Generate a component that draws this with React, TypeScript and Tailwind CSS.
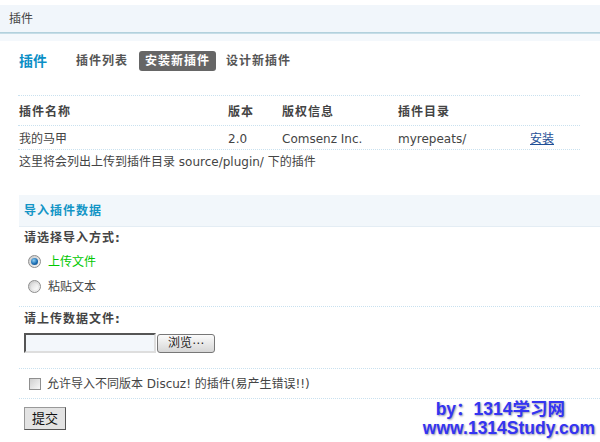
import React from "react";

const FONT = {
  fontFamily: '"DejaVu Sans", "Noto Sans CJK SC", sans-serif',
};

const DOTTED = "border-t border-dotted border-[#c9e1ef]";

function Radio({ checked }: { checked?: boolean }) {
  return (
    <span className="flex h-[13px] w-[13px] items-center justify-center rounded-full border border-[#8d8d8d] bg-[linear-gradient(135deg,#c9c9c9,#f7f7f7)]">
      {checked ? (
        <span className="h-[7px] w-[7px] rounded-full bg-[radial-gradient(circle_at_40%_35%,#8fd0f5,#1b6eb3_55%,#0a3f78)]" />
      ) : (
        <span className="h-[7px] w-[7px] rounded-full bg-[linear-gradient(135deg,#d9d9d9,#ffffff)]" />
      )}
    </span>
  );
}

export default function App() {
  return (
    <div
      className="relative h-[442px] w-[600px] overflow-hidden bg-white text-[12px] text-[#444]"
      style={FONT}
    >
      {/* top bar */}
      <div className="mt-[5px] flex h-[27px] items-center bg-[#f1f6fb] pl-[9px]">
        插件
      </div>
      <div className="h-[2px] bg-[linear-gradient(#a9cbd8,#cfe3ec)]" />
      <div className="h-[7px] bg-[#f4f8fc]" />

      {/* tabs */}
      <div className="mt-[10px] flex h-[20px] items-center pl-[19px]">
        <span className="text-[14px] font-bold text-[#0b8fc6]">插件</span>
        <span className="ml-[29px] font-bold tracking-[1px] text-[#555]">插件列表</span>
        <span className="ml-[11px] flex h-[20px] items-center rounded-[3px] bg-[#666] px-[6px] font-bold tracking-[1px] text-white">
          安装新插件
        </span>
        <span className="ml-[10px] font-bold tracking-[1px] text-[#555]">设计新插件</span>
      </div>

      {/* plugin table */}
      <div className="ml-[18px] mt-[24px] w-[562px]">
        <div
          className={`grid h-[30px] grid-cols-[209px_54px_116px_132px_1fr] items-center pl-px pt-[3px] font-bold tracking-[1px] text-[#444] ${DOTTED}`}
        >
          <span>插件名称</span>
          <span>版本</span>
          <span>版权信息</span>
          <span>插件目录</span>
          <span />
        </div>
        <div
          className={`grid h-[24px] grid-cols-[209px_54px_116px_132px_1fr] items-center pl-px pt-[2px] ${DOTTED}`}
        >
          <span>我的马甲</span>
          <span>2.0</span>
          <span>Comsenz Inc.</span>
          <span>myrepeats/</span>
          <span className="text-[#1f4f96] underline">安装</span>
        </div>
        <div className={`flex h-[25px] items-center pl-px ${DOTTED}`}>
          这里将会列出上传到插件目录 source/plugin/ 下的插件
        </div>
      </div>

      {/* import form */}
      <div className="ml-[19px] mt-[21px]">
        <div className="flex h-[32px] items-center border-b border-[#e4edf4] bg-[#f2f7fb] pl-[5px] font-bold tracking-[1px] text-[#1395c6]">
          导入插件数据
        </div>
        <div className="flex h-[22px] items-center pl-[5px] font-bold tracking-[1px] text-[#444]">
          请选择导入方式:
        </div>
        <div className="flex h-[25px] items-center gap-[7px] pl-[9px]">
          <Radio checked />
          <span className="text-[#00c800]">上传文件</span>
        </div>
        <div className="flex h-[25px] items-center gap-[7px] pl-[9px]">
          <Radio />
          <span>粘贴文本</span>
        </div>
        <div className="h-[7px]" />
        <div className={DOTTED} />
        <div className="flex h-[24px] items-center pl-[5px] font-bold tracking-[1px] text-[#444]">
          请上传数据文件:
        </div>
        <div className="mt-[2px] flex h-[20px] items-center pl-[5px]">
          <span className="h-[20px] w-[132px] border-2 border-b-[#dedede] border-l-[#555] border-r-[#dedede] border-t-[#555] bg-[#f3f7fb]" />
          <span className="ml-[1px] flex h-[19px] w-[58px] items-center justify-center rounded-[3px] border border-[#777] bg-[linear-gradient(#fbfbfb,#d6d6d6)] text-[#222]">
            浏览⋯
          </span>
        </div>
        <div className="h-[15px]" />
        <div className={DOTTED} />
        <div className="flex h-[29px] items-center gap-[6px] pl-[10px]">
          <span className="h-[12px] w-[12px] border border-[#8f8f8f] bg-[linear-gradient(135deg,#cfcfcf,#f8f8f8)]" />
          <span>允许导入不同版本 Discuz! 的插件(易产生错误!!)</span>
        </div>
        <div className={DOTTED} />
        <div className="mt-[8px] pl-[5px]">
          <span className="flex h-[23px] w-[42px] items-center justify-center border border-b-[#555] border-l-[#999] border-r-[#555] border-t-[#999] bg-[#e3e3e3] text-[13px] text-[#111]">
            提交
          </span>
        </div>
      </div>

      {/* watermark */}
      <div
        className="absolute right-[5px] top-[400px] text-right text-[17.5px] font-bold leading-[19px] text-[#3434f2] [text-shadow:1px_1px_2px_#9a9ab0]"
        style={{ fontFamily: '"Liberation Sans", "Noto Sans CJK SC", sans-serif' }}
      >
        <div className="pr-[30px]">by：1314学习网</div>
        <div>www.1314Study.com</div>
      </div>
    </div>
  );
}
